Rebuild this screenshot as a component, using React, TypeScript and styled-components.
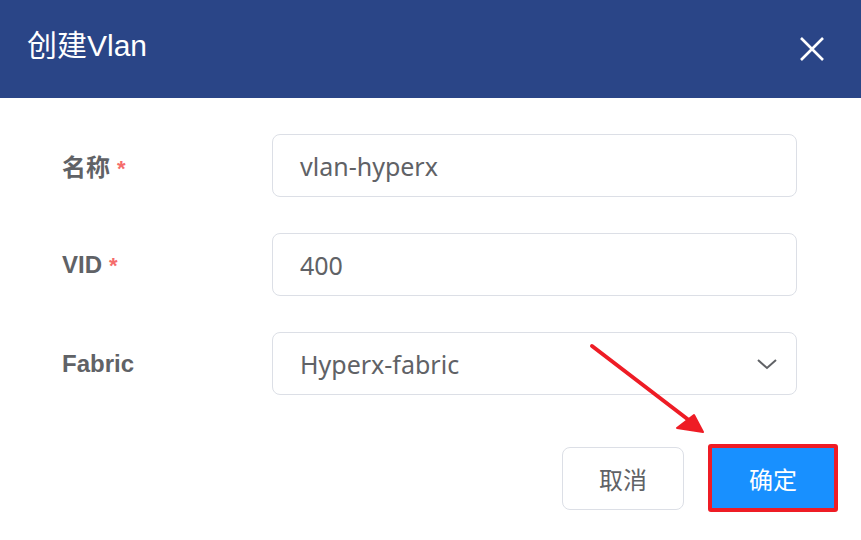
import React, { FC } from "react";
import styled, { createGlobalStyle } from "styled-components";

const GlobalStyle = createGlobalStyle`
  html, body {
    margin: 0;
    padding: 0;
    background: #ffffff;
  }
  body {
    font-family: "Noto Sans", "Noto Sans CJK SC", sans-serif;
  }
`;

const Dialog = styled.div`
  position: relative;
  width: 861px;
  height: 540px;
  background: #ffffff;
  overflow: hidden;
`;

const Header = styled.div`
  height: 98px;
  background: #2a4587;
  display: flex;
  align-items: center;
  justify-content: space-between;
  padding: 0 35px 0 27px;
  box-sizing: border-box;
`;

const Title = styled.h2`
  margin: 0 0 12px 0;
  font-family: "Liberation Sans", "Noto Sans CJK SC", sans-serif;
  font-weight: 400;
  font-size: 30px;
  color: #ffffff;
`;

const CloseButton = styled.button`
  width: 28px;
  height: 28px;
  padding: 0;
  border: none;
  background: transparent;
  display: flex;
  align-items: center;
  justify-content: center;
  cursor: pointer;
`;

const Form = styled.div`
  display: flex;
  flex-direction: column;
  gap: 36px;
  padding: 36px 64px 0 62px;
`;

const Row = styled.div`
  display: flex;
  align-items: center;
`;

const Label = styled.label`
  width: 210px;
  font-family: "Liberation Sans", "Noto Sans CJK SC", sans-serif;
  font-weight: 700;
  font-size: 24px;
  color: #606266;
`;

const Required = styled.span`
  color: #f56c6c;
  margin-left: 7px;
  font-size: 22px;
`;

const Field = styled.div`
  flex: 1;
  height: 63px;
  box-sizing: border-box;
  border: 1px solid #dcdfe6;
  border-radius: 8px;
  display: flex;
  align-items: center;
  justify-content: space-between;
  padding: 0 18px 0 27px;
  font-family: "Noto Sans", "Noto Sans CJK SC", sans-serif;
  font-size: 25px;
  color: #606266;
`;

const Footer = styled.div`
  display: flex;
  justify-content: flex-end;
  gap: 24px;
  padding: 52px 23px 0 0;
`;

const Button = styled.button<{ $primary?: boolean }>`
  width: ${(p) => (p.$primary ? "130px" : "122px")};
  height: ${(p) => (p.$primary ? "68px" : "63px")};
  box-sizing: border-box;
  border-radius: ${(p) => (p.$primary ? "3px" : "8px")};
  border: ${(p) => (p.$primary ? "4px solid #ee1c25" : "1px solid #dcdfe6")};
  background: ${(p) => (p.$primary ? "#1890ff" : "#ffffff")};
  color: ${(p) => (p.$primary ? "#ffffff" : "#606266")};
  font-family: "Noto Sans CJK SC", sans-serif;
  font-size: 24px;
  margin-top: ${(p) => (p.$primary ? "-3px" : "0")};
  cursor: pointer;
`;

const Arrow = styled.svg`
  position: absolute;
  left: 0;
  top: 0;
  pointer-events: none;
`;

const Chevron: FC = () => (
  <svg width="22" height="14" viewBox="0 0 22 14">
    <path d="M2 3 L11 11 L20 3" fill="none" stroke="#606266" strokeWidth="2" />
  </svg>
);

const App: FC = () => (
  <>
    <GlobalStyle />
    <Dialog>
      <Header>
        <Title>创建Vlan</Title>
        <CloseButton aria-label="close">
          <svg width="28" height="28" viewBox="0 0 28 28">
            <path d="M3 3 L25 25 M25 3 L3 25" stroke="#ffffff" strokeWidth="2.6" />
          </svg>
        </CloseButton>
      </Header>
      <Form>
        <Row>
          <Label>
            名称<Required>*</Required>
          </Label>
          <Field>vlan-hyperx</Field>
        </Row>
        <Row>
          <Label>
            VID<Required>*</Required>
          </Label>
          <Field>400</Field>
        </Row>
        <Row>
          <Label>Fabric</Label>
          <Field>
            Hyperx-fabric
            <Chevron />
          </Field>
        </Row>
      </Form>
      <Footer>
        <Button>取消</Button>
        <Button $primary>确定</Button>
      </Footer>
      <Arrow width="861" height="540" viewBox="0 0 861 540">
        <path d="M592 346 L690 421" stroke="#ee1c25" strokeWidth="4" strokeLinecap="round" />
        <path d="M703 432 L677 428 L694 415 Z" fill="#ee1c25" stroke="#ee1c25" strokeWidth="2" strokeLinejoin="round" />
      </Arrow>
    </Dialog>
  </>
);

export default App;
